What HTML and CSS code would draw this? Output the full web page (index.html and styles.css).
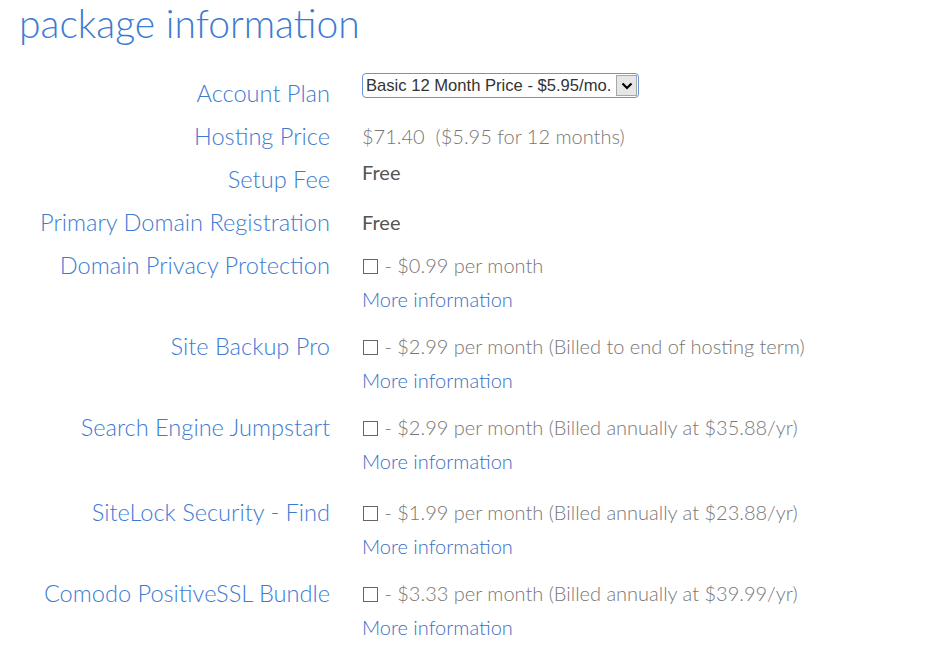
FILE: index.html
```html
<!DOCTYPE html>
<html lang="en">
<head>
    <meta charset="UTF-8">
    <meta name="viewport" content="width=device-width, initial-scale=1.0">
    <title>Package Information</title>
    <link rel="stylesheet" href="styles.css">
</head>
<body>

<div class="package">
    <h1 class="title">package information</h1>

    <div class="row">
        <label class="label" for="plan">Account Plan</label>
        <div class="value flush">
            <div class="select-wrap">
                <select id="plan">
                    <option>Basic 12 Month Price - $5.95/mo.</option>
                    <option>Basic 24 Month Price - $4.95/mo.</option>
                    <option>Basic 36 Month Price - $3.95/mo.</option>
                </select>
                <span class="select-arrow">
                    <svg width="12" height="8" viewBox="0 0 12 8"><path d="M1.5 1.5 L6 6 L10.5 1.5" fill="none" stroke="#000" stroke-width="2.2"/></svg>
                </span>
            </div>
        </div>
    </div>

    <div class="row">
        <div class="label">Hosting Price</div>
        <div class="value">$71.40 &nbsp;($5.95 for 12 months)</div>
    </div>

    <div class="row">
        <div class="label">Setup Fee</div>
        <div class="value tight free">Free</div>
    </div>

    <div class="row">
        <div class="label">Primary Domain Registration</div>
        <div class="value free">Free</div>
    </div>

    <div class="row addon">
        <label class="label" for="privacy">Domain Privacy Protection</label>
        <div class="value">
            <div><input type="checkbox" id="privacy"> - $0.99 per month</div>
            <a href="#" class="more">More information</a>
        </div>
    </div>

    <div class="row addon">
        <label class="label" for="backup">Site Backup Pro</label>
        <div class="value">
            <div><input type="checkbox" id="backup"> - $2.99 per month (Billed to end of hosting term)</div>
            <a href="#" class="more">More information</a>
        </div>
    </div>

    <div class="row addon spaced">
        <label class="label" for="seo">Search Engine Jumpstart</label>
        <div class="value">
            <div><input type="checkbox" id="seo"> - $2.99 per month (Billed annually at $35.88/yr)</div>
            <a href="#" class="more">More information</a>
        </div>
    </div>

    <div class="row addon">
        <label class="label" for="sitelock">SiteLock Security - Find</label>
        <div class="value">
            <div><input type="checkbox" id="sitelock"> - $1.99 per month (Billed annually at $23.88/yr)</div>
            <a href="#" class="more">More information</a>
        </div>
    </div>

    <div class="row addon">
        <label class="label" for="ssl">Comodo PositiveSSL Bundle</label>
        <div class="value">
            <div><input type="checkbox" id="ssl"> - $3.33 per month (Billed annually at $39.99/yr)</div>
            <a href="#" class="more">More information</a>
        </div>
    </div>
</div>

</body>
</html>
```

FILE: styles.css
```css
body {
    margin: 0;
    padding: 0;
    background-color: #fff;
    font-family: Lato, "Open Sans", sans-serif;
    font-weight: 300;
}

.title {
    margin: 0 0 27px;
    padding-left: 19px;
    font-size: 39px;
    font-weight: 300;
    line-height: 46px;
    color: #3d7bd3;
}

.row {
    display: flex;
    align-items: flex-start;
}

.row.addon {
    margin-bottom: 7px;
}

.row.spaced {
    margin-bottom: 11px;
}

.label {
    width: 330px;
    flex-shrink: 0;
    margin-top: -1px;
    margin-bottom: 1px;
    text-align: right;
    font-size: 23.6px;
    line-height: 43px;
    color: #3d7bd3;
}

.value {
    margin-left: 32px;
    padding-top: 3px;
    padding-bottom: 3px;
    font-size: 20px;
    line-height: 34px;
    color: #777;
}

.value.flush {
    padding: 0;
}

.value.tight {
    padding-top: 0;
    line-height: 26px;
}

.free {
    font-weight: 400;
    color: #555;
}

.more {
    display: block;
    color: #3a6ec4;
    text-decoration: none;
}

.value input[type="checkbox"] {
    appearance: none;
    width: 15px;
    height: 15px;
    margin: 0 1px 0 1px;
    vertical-align: -1px;
    border: 1px solid #666;
    background-color: #fff;
}

.select-wrap {
    position: relative;
    display: flex;
}

.select-wrap select {
    appearance: none;
    width: 277px;
    height: 25px;
    padding: 0 24px 0 3px;
    border: 1px solid #6b93d6;
    border-radius: 4px;
    background-color: #fff;
    font-family: "Liberation Sans", Arial, sans-serif;
    font-size: 16.6px;
    color: #333;
}

.select-arrow {
    position: absolute;
    top: 2px;
    right: 2px;
    display: flex;
    align-items: center;
    justify-content: center;
    width: 19px;
    height: 19px;
    border: 1px solid #a8a8a8;
    background-color: #e6e6e6;
    pointer-events: none;
}
```
